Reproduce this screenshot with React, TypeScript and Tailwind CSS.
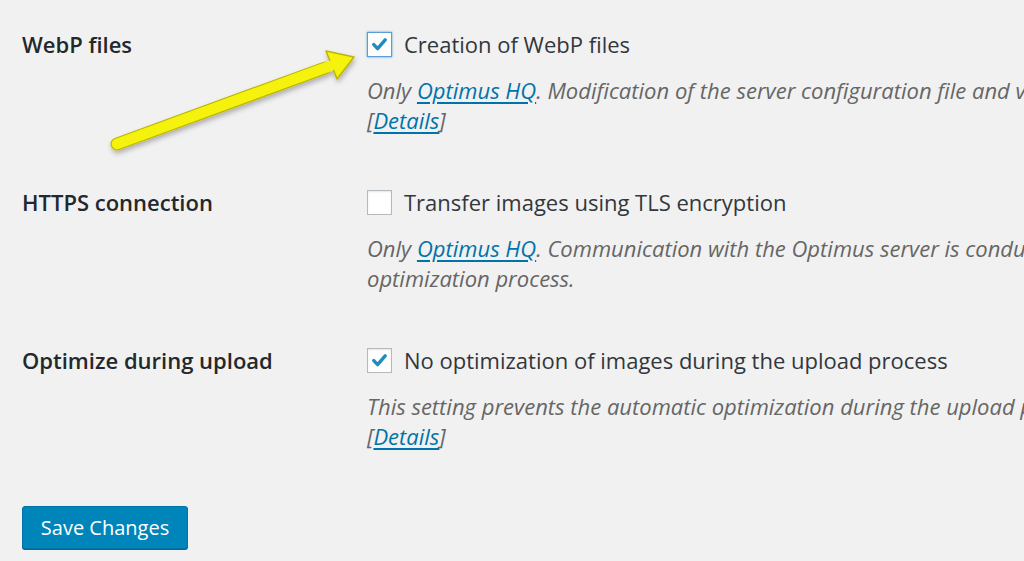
import React from 'react'

type Row = {
  label: string
  option: string
  checked: boolean
  focused?: boolean
  lines: React.ReactNode[]
}

const Link = ({ children }: { children: React.ReactNode }) => (
  <a href="#" className="text-[#0073aa] underline underline-offset-[3px]">
    {children}
  </a>
)

const ROWS: Row[] = [
  {
    label: 'WebP files',
    option: 'Creation of WebP files',
    checked: true,
    focused: true,
    lines: [
      <>Only <Link>Optimus HQ</Link>. Modification of the server configuration file and verification of the WebP files.</>,
      <>[<Link>Details</Link>]</>,
    ],
  },
  {
    label: 'HTTPS connection',
    option: 'Transfer images using TLS encryption',
    checked: false,
    lines: [
      <>Only <Link>Optimus HQ</Link>. Communication with the Optimus server is conducted through a secure connection during the</>,
      <>optimization process.</>,
    ],
  },
  {
    label: 'Optimize during upload',
    option: 'No optimization of images during the upload process',
    checked: true,
    lines: [
      <>This setting prevents the automatic optimization during the upload process. Images can be optimized later.</>,
      <>[<Link>Details</Link>]</>,
    ],
  },
]

function Checkbox({ checked, focused }: { checked: boolean; focused?: boolean }) {
  return (
    <span
      className={
        focused
          ? 'w-[25px] h-[25px] shrink-0 flex items-center justify-center bg-white border border-[#5b9dd9] shadow-[0_0_2px_rgba(30,140,190,0.8)]'
          : 'w-[25px] h-[25px] shrink-0 flex items-center justify-center bg-white border border-[#b4b9be] shadow-[inset_0_1px_2px_rgba(0,0,0,0.1)]'
      }
    >
      {checked && (
        <svg width="17" height="17" viewBox="0 0 17 17">
          <path d="M2.8 8.6 L6.6 12.6 L14.2 3.8" fill="none" stroke="#1e8cbe" strokeWidth="3.4" strokeLinecap="round" strokeLinejoin="round" />
        </svg>
      )}
    </span>
  )
}

function Arrow() {
  return (
    <svg className="absolute left-0 top-0 pointer-events-none" width="400" height="180" viewBox="0 0 400 180">
      <defs>
        <filter id="sh" x="-20%" y="-20%" width="140%" height="140%">
          <feDropShadow dx="1" dy="3" stdDeviation="2.5" floodColor="#000" floodOpacity="0.28" />
        </filter>
      </defs>
      <g filter="url(#sh)">
        <line x1="117" y1="144" x2="325" y2="68" stroke="#bdb600" strokeWidth="13" strokeLinecap="round" />
        <path
          d="M326 51 L354 57 L337 79 Z"
          fill="#f5f20c"
          stroke="#bdb600"
          strokeWidth="1.5"
          strokeLinejoin="round"
        />
        <line x1="117" y1="144" x2="330" y2="66" stroke="#f5f20c" strokeWidth="10.5" strokeLinecap="round" />
      </g>
    </svg>
  )
}

export default function App() {
  return (
    <div className="relative w-[1024px] h-[561px] overflow-hidden bg-[#f1f1f1] font-['Open_Sans',sans-serif]">
      <div className="pt-[29px] pl-[22px] flex flex-col gap-[52px]">
        {ROWS.map((r) => (
          <div key={r.label} className="grid grid-cols-[345px_1fr]">
            <div className="h-[30px] leading-[30px] text-[22px] font-semibold text-[#23282d] whitespace-nowrap">
              {r.label}
            </div>
            <div className="flex flex-col gap-[16px]">
              <label className="h-[30px] flex items-center gap-[12px] text-[22px] text-[#32373c] whitespace-nowrap">
                <Checkbox checked={r.checked} focused={r.focused} />
                {r.option}
              </label>
              <div className="text-[22px] leading-[30px] italic text-[#666] whitespace-nowrap">
                {r.lines.map((l, i) => (
                  <div key={i}>{l}</div>
                ))}
              </div>
            </div>
          </div>
        ))}
      </div>
      <div className="pl-[22px] pt-[55px]">
        <button className="h-[43px] w-[166px] rounded-[3px] bg-[#0085ba] border border-[#0073aa] shadow-[0_1px_0_#006799] text-white text-[20px] leading-none">
          Save Changes
        </button>
      </div>
      <Arrow />
    </div>
  )
}
